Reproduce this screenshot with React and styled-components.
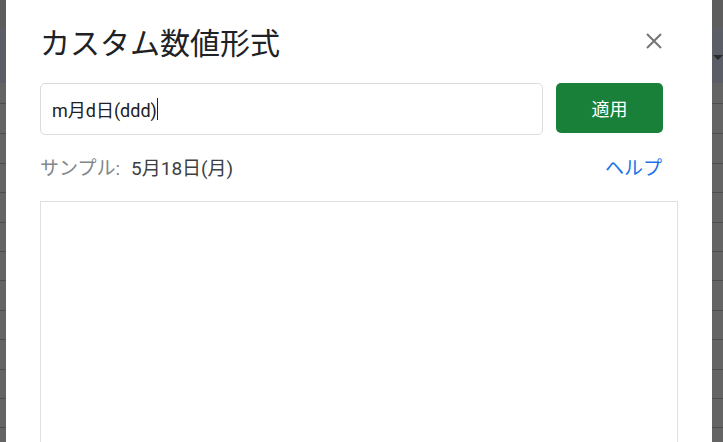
import React from "react";
import styled, { createGlobalStyle } from "styled-components";

const Global = createGlobalStyle`
  html, body {
    margin: 0;
    padding: 0;
    background: #646464;
  }
  body {
    font-family: Roboto, "Noto Sans CJK JP", sans-serif;
  }
`;

const Screen = styled.div`
  display: flex;
  width: 723px;
  height: 442px;
  overflow: hidden;
`;

const Strip = styled.div`
  flex: 0 0 ${(p) => p.$width}px;
  background:
    linear-gradient(#5d5d5d 0 28px, #5b5e66 28px 83px, transparent 83px),
    repeating-linear-gradient(#646464 0 28.4px, #4e4e4e 28.4px 29.4px);
  background-position: 0 0, 0 105px;
  background-repeat: no-repeat, repeat;
  position: relative;
`;

const Caret = styled.div`
  position: absolute;
  top: 55px;
  left: 1px;
  border-left: 5px solid transparent;
  border-right: 5px solid transparent;
  border-top: 5px solid #2b2b2b;
`;

const Dialog = styled.div`
  flex: 1;
  background: #fff;
  padding: 21px 34px 0 34px;
  display: flex;
  flex-direction: column;
`;

const Top = styled.div`
  margin-right: 15px;
  display: flex;
  flex-direction: column;
`;

const Header = styled.div`
  display: flex;
  align-items: center;
  justify-content: space-between;
  height: 40px;
`;

const Title = styled.h1`
  margin: 0;
  font-family: "Noto Sans CJK JP", sans-serif;
  font-size: 30px;
  font-weight: 400;
  line-height: 40px;
  color: #202124;
`;

const Close = styled.button`
  border: 0;
  background: none;
  padding: 0;
  width: 24px;
  height: 24px;
  display: flex;
  align-items: center;
  justify-content: center;
  margin-right: -3px;
  cursor: pointer;
`;

const FormRow = styled.div`
  display: flex;
  align-items: flex-start;
  gap: 13px;
  margin-top: 22px;
`;

const Field = styled.div`
  flex: 1;
  height: 50px;
  border: 1px solid #dadce0;
  border-radius: 5px;
  display: flex;
  align-items: center;
  padding: 0 11px;
  font-size: 18px;
  color: #202124;
`;

const Cursor = styled.span`
  display: inline-block;
  width: 1px;
  height: 22px;
  background: #202124;
`;

const Apply = styled.button`
  flex: 0 0 107px;
  height: 50px;
  border: 0;
  border-radius: 5px;
  background: #188038;
  color: #fff;
  font-family: Roboto, "Noto Sans CJK JP", sans-serif;
  font-size: 18px;
  cursor: pointer;
`;

const SampleRow = styled.div`
  display: flex;
  align-items: center;
  justify-content: space-between;
  height: 36px;
  margin-top: 13px;
  font-size: 19px;
`;

const Sample = styled.div`
  display: flex;
  gap: 11px;
`;

const Label = styled.span`
  color: #80868b;
`;

const Value = styled.span`
  color: #3c4043;
`;

const Help = styled.a`
  color: #1a73e8;
  text-decoration: none;
  margin-right: 1px;
`;

const Preview = styled.div`
  margin-top: 17px;
  flex: 1;
  border: 1px solid #e0e0e0;
  border-bottom: 0;
`;

export default function App() {
  return (
    <>
      <Global />
      <Screen>
        <Strip $width={6} />
        <Dialog>
          <Top>
            <Header>
              <Title>カスタム数値形式</Title>
              <Close aria-label="閉じる">
                <svg width="16" height="16" viewBox="0 0 16 16">
                  <path d="M1 1L15 15M15 1L1 15" stroke="#757575" strokeWidth="2" />
                </svg>
              </Close>
            </Header>
            <FormRow>
              <Field>
                m月d日(ddd)
                <Cursor />
              </Field>
              <Apply>適用</Apply>
            </FormRow>
            <SampleRow>
              <Sample>
                <Label>サンプル:</Label>
                <Value>5月18日(月)</Value>
              </Sample>
              <Help href="#">ヘルプ</Help>
            </SampleRow>
          </Top>
          <Preview />
        </Dialog>
        <Strip $width={11}>
          <Caret />
        </Strip>
      </Screen>
    </>
  );
}
